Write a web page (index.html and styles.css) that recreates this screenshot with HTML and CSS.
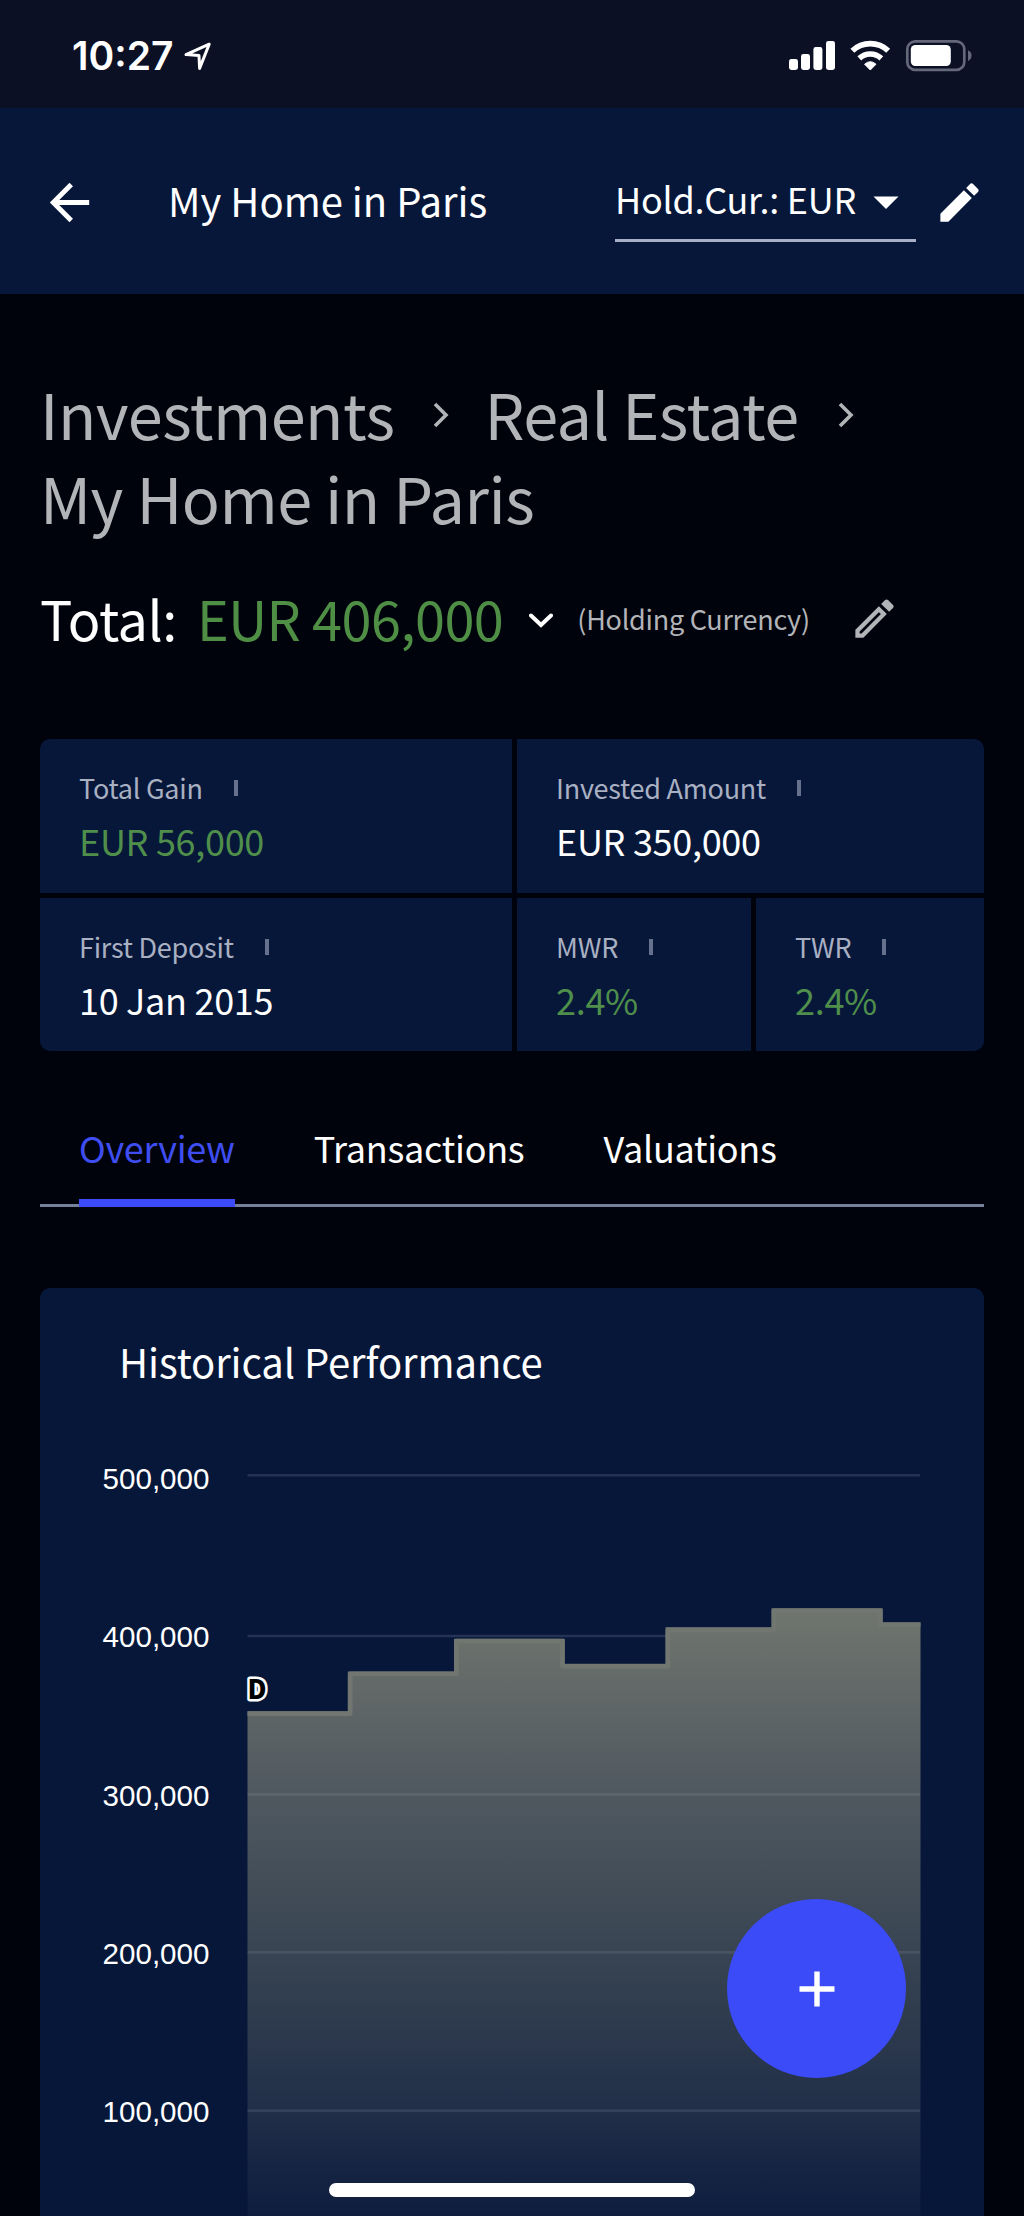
FILE: index.html
```html
<!DOCTYPE html>
<html lang="en">
<head>
  <meta charset="UTF-8">
  <meta name="viewport" content="width=device-width, initial-scale=1.0">
  <title>My Home in Paris</title>
  <link rel="stylesheet" href="styles.css">
</head>
<body>
<div class="screen">

  <!-- Status bar -->
  <div class="status-bar">
    <span class="time">10:27</span>
    <svg class="location" width="30" height="32" viewBox="183 39 30 32">
      <path d="M209.2 43.2L186 53.6L199 54.6L199.6 67.4Z" fill="none" stroke="#fff" stroke-width="3" stroke-linejoin="round"/>
    </svg>
    <svg class="indicators" width="184" height="34" viewBox="789 39 184 34">
      <g fill="#fff">
        <rect x="789" y="59" width="9" height="11" rx="2.4"/>
        <rect x="801" y="54" width="9" height="16" rx="2.4"/>
        <rect x="813.4" y="47" width="9" height="23" rx="2.4"/>
        <rect x="826" y="41" width="9" height="29" rx="2.4"/>
        <path d="M864.6 64.2Q870.3 59.2 876 64.2L870.3 70Z" stroke="#fff" stroke-width="1" stroke-linejoin="round"/>
      </g>
      <g fill="none" stroke="#fff" stroke-width="5.6">
        <path d="M852.4 50.8A26 26 0 0 1 888.2 50.8"/>
        <path d="M859.3 58.4A16 16 0 0 1 881.3 58.4"/>
      </g>
      <rect x="907.3" y="41.3" width="57" height="28.6" rx="8" fill="none" stroke="#65687a" stroke-width="2.7"/>
      <rect x="910.8" y="45" width="40" height="21" rx="4.5" fill="#fff"/>
      <path d="M968 50.3Q971.6 51.8 971.6 55.6T968 61Z" fill="#65687a"/>
    </svg>
  </div>

  <!-- App header -->
  <header class="app-header">
    <svg class="icon-back" viewBox="0 0 24 24"><path d="M20 11H7.83l5.59-5.59L12 4l-8 8 8 8 1.41-1.41L7.83 13H20v-2z" fill="#fff"/></svg>
    <div class="header-title">My Home in Paris</div>
    <div class="currency-select">
      <span>Hold.Cur.: EUR</span>
      <svg width="26" height="14" viewBox="0 0 26 14"><path d="M0.5 0.5H25.5L13 13Z" fill="#fff"/></svg>
    </div>
    <svg class="icon-edit" viewBox="0 0 24 24"><path d="M3 17.25V21h3.75L17.81 9.94l-3.75-3.75L3 17.25zM20.71 7.04c.39-.39.39-1.02 0-1.41l-2.34-2.34c-.39-.39-1.02-.39-1.41 0l-1.83 1.83 3.75 3.75 1.83-1.83z" fill="#fff"/></svg>
  </header>

  <main class="content">
    <nav class="breadcrumb">
      <span>Investments</span>
      <svg class="crumb-arrow" viewBox="0 0 16 26"><path d="M2 2L13 13L2 24" fill="none" stroke="#b3b4b8" stroke-width="3.6"/></svg>
      <span>Real Estate</span>
      <svg class="crumb-arrow" viewBox="0 0 16 26"><path d="M2 2L13 13L2 24" fill="none" stroke="#b3b4b8" stroke-width="3.6"/></svg>
      <span class="crumb-current">My Home in Paris</span>
    </nav>

    <div class="total">
      <span class="total-label">Total:</span>
      <span class="total-value">EUR 406,000</span>
      <svg class="total-arrow" viewBox="0 0 24 15"><path d="M2 2.5L12 12L22 2.5" fill="none" stroke="#fff" stroke-width="4" stroke-linecap="round"/></svg>
      <span class="total-note">(Holding Currency)</span>
      <svg class="total-edit" viewBox="0 0 24 24"><path d="M14.06,9L15,9.94L5.92,19H5V18.08L14.06,9M17.66,3C17.41,3 17.15,3.1 16.96,3.29L15.13,5.12L18.88,8.87L20.71,7.04C21.1,6.65 21.1,6 20.71,5.63L18.37,3.29C18.17,3.09 17.92,3 17.66,3M14.06,6.19L3,17.25V21H6.75L17.81,9.94L14.06,6.19Z" fill="#b3b4b8"/></svg>
    </div>

    <!-- Key figures -->
    <section class="stats">
      <div class="stat">
        <div class="stat-label">Total Gain<i class="tick"></i></div>
        <div class="stat-value green">EUR 56,000</div>
      </div>
      <div class="stat wide">
        <div class="stat-label">Invested Amount<i class="tick"></i></div>
        <div class="stat-value">EUR 350,000</div>
      </div>
      <div class="stat">
        <div class="stat-label">First Deposit<i class="tick"></i></div>
        <div class="stat-value">10 Jan 2015</div>
      </div>
      <div class="stat">
        <div class="stat-label">MWR<i class="tick"></i></div>
        <div class="stat-value green">2.4%</div>
      </div>
      <div class="stat">
        <div class="stat-label">TWR<i class="tick"></i></div>
        <div class="stat-value green">2.4%</div>
      </div>
    </section>

    <!-- Tabs -->
    <nav class="tabs">
      <a class="tab active">Overview</a>
      <a class="tab">Transactions</a>
      <a class="tab">Valuations</a>
    </nav>

    <!-- Chart -->
    <section class="chart-card">
      <h2>Historical Performance</h2>
      <svg class="chart" width="944" height="796" viewBox="40 1420 944 796">
        <defs>
          <linearGradient id="area" gradientUnits="userSpaceOnUse" x1="0" y1="1608" x2="0" y2="2216">
            <stop offset="0" stop-color="#70756e"/>
            <stop offset="0.3" stop-color="#505960"/>
            <stop offset="0.57" stop-color="#384452"/>
            <stop offset="0.83" stop-color="#202e48"/>
            <stop offset="1" stop-color="#0e1c3f"/>
          </linearGradient>
        </defs>
        <g stroke="#243354" stroke-width="2.6">
          <path d="M247.5 1475.2H920"/>
          <path d="M247.5 1636H920"/>
        </g>
        <path d="M247.5 2216V1711.2H347.8V1671.4H454V1638.7H564.8V1663.8H665.5V1627.3H771.5V1608.3H882.7V1622.3H920.5V2216Z" fill="url(#area)"/>
        <path d="M247.5 1713.6H350.2V1673.8H456.4V1641H562.4V1666.2H667.9V1629.7H773.9V1610.7H880.3V1624.7H920.5" fill="none" stroke="#717770" stroke-width="4.6" stroke-linejoin="round"/>
        <g stroke="#8e9ab4" stroke-opacity="0.18" stroke-width="2.6">
          <path d="M247.5 1794.4H920"/>
          <path d="M247.5 1952.4H920"/>
          <path d="M247.5 2110.6H920"/>
        </g>
        <g class="axis" text-anchor="end">
          <text x="209.5" y="1488.7">500,000</text>
          <text x="209.5" y="1647.3">400,000</text>
          <text x="209.5" y="1805.8">300,000</text>
          <text x="209.5" y="1964.2">200,000</text>
          <text x="209.5" y="2122.4">100,000</text>
        </g>
        <text class="marker" x="247.6" y="1699">D</text>
      </svg>
    </section>
  </main>

  <button class="fab" aria-label="Add">
    <svg width="36" height="36" viewBox="0 0 36 36"><path d="M18 0.5V35.5M0.5 18H35.5" stroke="#fff" stroke-width="5.4"/></svg>
  </button>
  <div class="home-indicator"></div>

</div>
</body>
</html>
```
FILE: styles.css
```css
* {
  box-sizing: border-box;
}
body {
  margin: 0;
  background: #00030c;
  color: #fff;
  font-family: "Noto Sans CJK SC", "Noto Sans", sans-serif;
}
svg {
  display: block;
  flex: none;
}
.screen {
  position: relative;
  width: 1024px;
  height: 2216px;
  overflow: hidden;
}

/* status bar */
.status-bar {
  display: flex;
  align-items: center;
  height: 108px;
  padding: 3px 51px 0 72px;
  background: #0b1025;
}
.time {
  width: 111px;
  font-family: Inter, sans-serif;
  font-size: 39px;
  font-weight: 600;
  white-space: nowrap;
}
.indicators {
  margin-left: auto;
}

/* header */
.app-header {
  display: flex;
  align-items: center;
  height: 186px;
  padding: 0 39px 0 40px;
  background: #06173a;
}
.icon-back {
  width: 59px;
  height: 59px;
  margin-top: 3px;
}
.header-title {
  width: 447px;
  margin: 0 0 3px 69px;
  font-size: 40px;
  line-height: 60px;
  white-space: nowrap;
}
.currency-select {
  display: flex;
  align-items: center;
  justify-content: space-between;
  width: 301px;
  height: 80px;
  margin-top: 1px;
  padding-right: 17px;
  border-bottom: 3px solid #a7aec6;
  font-size: 36px;
  letter-spacing: -0.27px;
  white-space: nowrap;
}
.currency-select span {
  margin-bottom: 4px;
}
.currency-select svg {
  margin-top: 5px;
}
.icon-edit {
  width: 51px;
  height: 51px;
  margin: 3px 0 0 18px;
}

.content {
  padding: 77px 40px 0;
}

/* breadcrumb */
.breadcrumb {
  display: flex;
  flex-wrap: wrap;
  align-items: center;
  color: #b3b4b8;
  font-size: 63px;
  letter-spacing: -0.55px;
  line-height: 84px;
}
.crumb-arrow {
  width: 16px;
  height: 26px;
  margin: 4px 35px 0 39px;
}
.crumb-current {
  width: 100%;
}

/* total */
.total {
  display: flex;
  align-items: center;
  height: 80px;
  margin-top: 39px;
  white-space: nowrap;
}
.total-label,
.total-value {
  font-size: 54px;
  letter-spacing: -0.5px;
  line-height: 80px;
}
.total-value {
  margin-left: 20px;
  color: #4f8f45;
}
.total-arrow {
  width: 24px;
  height: 15px;
  margin: 4px 24px 0 26px;
}
.total-note {
  color: #b3b4b8;
  font-size: 27px;
  letter-spacing: -0.27px;
}
.total-edit {
  width: 51px;
  height: 51px;
  margin-left: 39px;
}

/* key figures */
.stats {
  display: grid;
  grid-template-columns: 472px 234px 228px;
  grid-template-rows: 154px 153px;
  gap: 5px;
  margin-top: 81px;
  border-radius: 10px;
  overflow: hidden;
}
.stat {
  padding: 30px 39px 0;
  background: #06173a;
}
.stat.wide {
  grid-column: span 2;
}
.stat-label {
  display: flex;
  align-items: center;
  color: #a9b0c2;
  font-size: 27px;
  letter-spacing: -0.25px;
  line-height: 38px;
}
.tick {
  width: 4px;
  height: 16px;
  margin-left: 31px;
  background: #66718d;
}
.stat-value {
  margin-top: 7px;
  font-size: 36px;
  letter-spacing: -0.3px;
  line-height: 52px;
}
.green {
  color: #4f8f4b;
}

/* tabs */
.tabs {
  display: flex;
  gap: 79px;
  height: 108px;
  margin-top: 48px;
  padding-left: 39px;
  border-bottom: 3px solid #77809a;
}
.tab {
  height: 108px;
  padding-top: 19px;
  font-size: 36px;
  letter-spacing: -0.28px;
  line-height: 58px;
}
.tab.active {
  color: #3f4ef0;
  border-bottom: 8px solid #3b4bf7;
}

/* chart */
.chart-card {
  height: 940px;
  margin-top: 81px;
  padding-top: 43px;
  border-radius: 10px;
  background: #06173a;
}
.chart-card h2 {
  margin: 0 0 29px 79px;
  font-size: 40px;
  font-weight: 400;
  letter-spacing: -0.1px;
  line-height: 60px;
}
.axis text {
  fill: #fff;
  font-family: "Liberation Sans", Arial, sans-serif;
  font-size: 29.6px;
}
.marker {
  fill: #000;
  stroke: #fff;
  stroke-width: 5px;
  stroke-linejoin: round;
  paint-order: stroke;
  font-size: 26px;
  font-weight: 900;
}

/* floating button and home bar */
.fab {
  position: absolute;
  top: 1899px;
  left: 727px;
  display: flex;
  align-items: center;
  justify-content: center;
  width: 179px;
  height: 179px;
  padding: 0;
  border: 0;
  border-radius: 50%;
  background: #3b4bf7;
}
.home-indicator {
  position: absolute;
  left: 329px;
  top: 2183px;
  width: 366px;
  height: 14px;
  border-radius: 7px;
  background: #fff;
}
```
